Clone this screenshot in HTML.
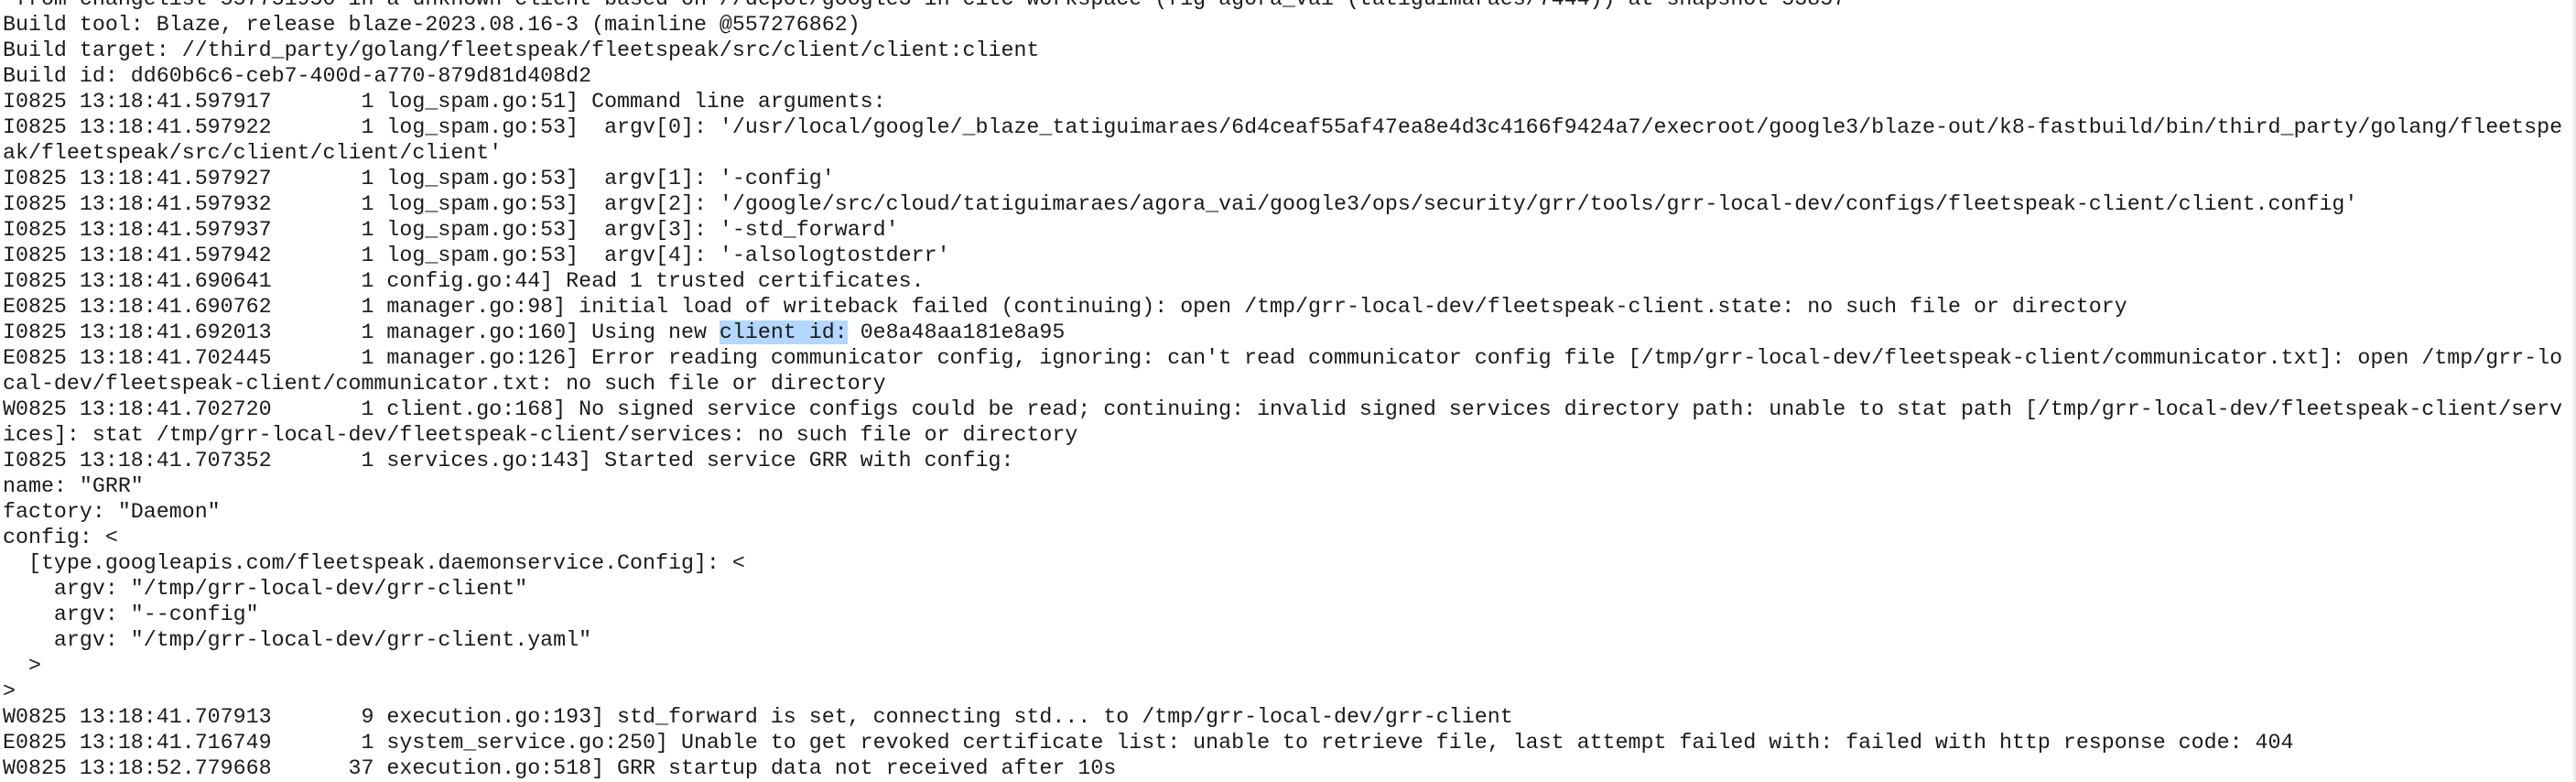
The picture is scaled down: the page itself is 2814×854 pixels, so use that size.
<!DOCTYPE html>
<html><head><meta charset="utf-8"><style>
html,body{margin:0;padding:0;background:#fff;width:2814px;height:854px;overflow:hidden}
pre{position:absolute;left:3px;top:-15px;margin:0;font-family:"Liberation Mono",monospace;font-size:23.3px;line-height:28px;color:#1a1a1a;white-space:pre}
.hl{background:#b3d7fe}
.sb{position:absolute;right:0;top:0;width:3px;height:854px;background:#ececec}
</style></head><body>
<pre> from changelist 557751950 in a unknown client based on //depot/google3 in citc workspace (fig agora_vai (tatiguimaraes/7444)) at snapshot 53857
Build tool: Blaze, release blaze-2023.08.16-3 (mainline @557276862)
Build target: //third_party/golang/fleetspeak/fleetspeak/src/client/client:client
Build id: dd60b6c6-ceb7-400d-a770-879d81d408d2
I0825 13:18:41.597917       1 log_spam.go:51] Command line arguments:
I0825 13:18:41.597922       1 log_spam.go:53]  argv[0]: '/usr/local/google/_blaze_tatiguimaraes/6d4ceaf55af47ea8e4d3c4166f9424a7/execroot/google3/blaze-out/k8-fastbuild/bin/third_party/golang/fleetspe
ak/fleetspeak/src/client/client/client'
I0825 13:18:41.597927       1 log_spam.go:53]  argv[1]: '-config'
I0825 13:18:41.597932       1 log_spam.go:53]  argv[2]: '/google/src/cloud/tatiguimaraes/agora_vai/google3/ops/security/grr/tools/grr-local-dev/configs/fleetspeak-client/client.config'
I0825 13:18:41.597937       1 log_spam.go:53]  argv[3]: '-std_forward'
I0825 13:18:41.597942       1 log_spam.go:53]  argv[4]: '-alsologtostderr'
I0825 13:18:41.690641       1 config.go:44] Read 1 trusted certificates.
E0825 13:18:41.690762       1 manager.go:98] initial load of writeback failed (continuing): open /tmp/grr-local-dev/fleetspeak-client.state: no such file or directory
I0825 13:18:41.692013       1 manager.go:160] Using new <span class="hl">client id:</span> 0e8a48aa181e8a95
E0825 13:18:41.702445       1 manager.go:126] Error reading communicator config, ignoring: can't read communicator config file [/tmp/grr-local-dev/fleetspeak-client/communicator.txt]: open /tmp/grr-lo
cal-dev/fleetspeak-client/communicator.txt: no such file or directory
W0825 13:18:41.702720       1 client.go:168] No signed service configs could be read; continuing: invalid signed services directory path: unable to stat path [/tmp/grr-local-dev/fleetspeak-client/serv
ices]: stat /tmp/grr-local-dev/fleetspeak-client/services: no such file or directory
I0825 13:18:41.707352       1 services.go:143] Started service GRR with config:
name: "GRR"
factory: "Daemon"
config: &lt;
  [type.googleapis.com/fleetspeak.daemonservice.Config]: &lt;
    argv: "/tmp/grr-local-dev/grr-client"
    argv: "--config"
    argv: "/tmp/grr-local-dev/grr-client.yaml"
  &gt;
&gt;
W0825 13:18:41.707913       9 execution.go:193] std_forward is set, connecting std... to /tmp/grr-local-dev/grr-client
E0825 13:18:41.716749       1 system_service.go:250] Unable to get revoked certificate list: unable to retrieve file, last attempt failed with: failed with http response code: 404
W0825 13:18:52.779668      37 execution.go:518] GRR startup data not received after 10s</pre>
<div class="sb"></div>
</body></html>
